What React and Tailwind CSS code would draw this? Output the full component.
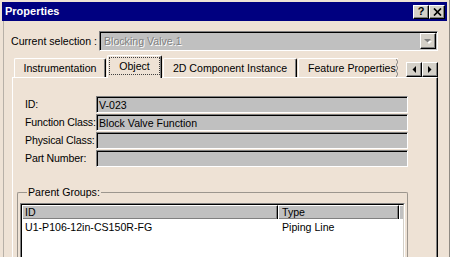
import React from "react";

const raised =
	"bg-[#d4d0c8] border border-t-white border-l-white border-b-black border-r-black shadow-[inset_-1px_-1px_0_#808080]";

function TitleButton({ children }) {
	return (
		<div className={`w-[16px] h-[14px] flex items-center justify-center ${raised}`}>
			{children}
		</div>
	);
}

function Field({ label, value, top }) {
	return (
		<div className={`flex items-center h-[17px] ml-[8px] ${top ? "" : "mt-[1px]"}`}>
			<div className="w-[71px] flex-none whitespace-nowrap tracking-[-0.15px]">{label}</div>
			<div className="w-[312px] h-full bg-[#c0c0c0] border border-t-[#808080] border-l-[#808080] border-b-white border-r-white shadow-[inset_1px_1px_0_#000] flex items-center pl-[2px] pt-px">
				{value}
			</div>
		</div>
	);
}

function Tab({ width, children }) {
	return (
		<div
			className={`${width} h-[19px] flex items-center justify-center rounded-t-[2px] border-t border-l border-r border-t-white border-l-white border-r-black shadow-[inset_-1px_0_0_#808080] whitespace-nowrap`}
		>
			{children}
		</div>
	);
}

const headCell =
	"flex items-center bg-[#c0c0c0] border-t border-l border-r border-t-white border-l-white border-r-black shadow-[inset_-1px_-1px_0_#808080]";

export default function App() {
	return (
		<div className="w-[450px] h-[257px] overflow-hidden flex flex-col bg-[#eee2d5] pt-[2px] pl-[2px] pr-[2px] border-r border-r-[#8f8a83] text-[10.6px] leading-none text-black font-[family-name:Liberation_Sans,Arial,sans-serif]">
			{/* title bar */}
			<div className="h-[19px] flex-none bg-[#000080] flex items-center pl-[3px] pr-[2px]">
				<span className="text-white font-bold text-[11px]">Properties</span>
				<div className="ml-auto flex">
					<TitleButton>
						<span className="font-bold text-[11px] leading-none">?</span>
					</TitleButton>
					<TitleButton>
						<svg width="9" height="8" viewBox="0 0 9 8">
							<path d="M1 0.5 L8 7.5 M8 0.5 L1 7.5" stroke="#000" strokeWidth="1.7" />
						</svg>
					</TitleButton>
				</div>
			</div>

			{/* body */}
			<div className="flex-1 flex flex-col ml-px border-l border-[#b7b0a7] pt-[10px]">
				<div className="flex items-center h-[20px]">
					<div className="w-[95px] pl-[7px] whitespace-nowrap">Current selection :</div>
					<div className="w-[339px] h-full flex items-center bg-[#c0c0c0] border border-t-[#808080] border-l-[#808080] border-b-white border-r-white shadow-[inset_1px_1px_0_#000]">
						<span className="pl-[4px] text-[#808080] [text-shadow:1px_1px_0_#fff]">Blocking Valve.1</span>
						<div className={`ml-auto mr-[1px] w-[16px] h-[16px] flex items-center justify-center ${raised}`}>
							<svg width="8" height="5" viewBox="0 0 8 5">
								<path d="M1 1 L7 1 L4 4 Z" fill="#fff" transform="translate(1 1)" />
								<path d="M0 0 L7 0 L3.5 3.5 Z" fill="#808080" />
							</svg>
						</div>
					</div>
				</div>

				{/* tabs */}
				<div className="mt-[4px] w-[434px] h-[22px] flex items-end pl-[10px] relative z-10">
					<Tab width="w-[92px]">Instrumentation</Tab>
					<div className="ml-[1px] w-[55px] h-[23px] -mb-px bg-[#eee2d5] rounded-t-[2px] border-t border-l border-r border-t-white border-l-white border-r-black shadow-[inset_-1px_0_0_#808080] pt-[1px] pb-[3px] px-px flex">
						<div className="flex-1 border border-dotted border-[#404040] flex items-center justify-center">
							Object
						</div>
					</div>
					<div className="ml-[1px]">
						<Tab width="w-[134px]">2D Component Instance</Tab>
					</div>
					<div className="ml-[1px] w-[100px] h-[19px] flex items-center rounded-tl-[2px] border-t border-l border-t-white border-l-white whitespace-nowrap overflow-hidden">
						<span className="pl-[9px]">Feature Properties</span>
						<svg className="ml-auto flex-none" width="3" height="18" viewBox="0 0 3 18">
							<path d="M0 0 L2 3 L0 6 L2 9 L0 12 L2 15 L0 18" stroke="#808080" fill="none" />
						</svg>
					</div>
					<div className="ml-auto self-start mt-[7px] flex">
						<div className={`w-[16px] h-[15px] flex items-center justify-center ${raised}`}>
							<svg width="4" height="7" viewBox="0 0 4 7">
								<path d="M4 0 L4 7 L0.5 3.5 Z" fill="#000" />
							</svg>
						</div>
						<div className={`w-[16px] h-[15px] flex items-center justify-center ${raised}`}>
							<svg width="4" height="7" viewBox="0 0 4 7">
								<path d="M0 0 L0 7 L3.5 3.5 Z" fill="#000" />
							</svg>
						</div>
					</div>
				</div>

				{/* tab page */}
				<div className="flex-1 ml-[8px] w-[426px] border-t border-l border-r border-t-white border-l-white border-r-black shadow-[inset_-1px_0_0_#808080] pt-[18px] pl-[4px]">
					<Field label="ID:" value="V-023" top />
					<Field label="Function Class:" value="Block Valve Function" />
					<Field label="Physical Class:" value="" />
					<Field label="Part Number:" value="" />

					{/* group box */}
					<div className="mt-[18px] w-[391px] flex flex-col">
						<div className="flex h-[14px]">
							<div className="w-[10px] h-[7px] self-end border-t border-l border-[#9c968e] rounded-tl-[2px]" />
							<span className="px-[1px] self-center whitespace-nowrap">Parent Groups:</span>
							<div className="flex-1 h-[7px] self-end border-t border-r border-[#9c968e] rounded-tr-[2px]" />
						</div>
						<div className="h-[90px] border-l border-r border-[#9c968e] pt-[4px] pl-[2px]">
							<div className="w-[385px] h-[80px] border border-t-[#808080] border-l-[#808080] border-b-white border-r-white">
								<div className="h-full border border-t-black border-l-black border-b-[#d4d0c8] border-r-[#d4d0c8] bg-white">
									<div className="flex h-[14px]">
										<div className={`w-[256px] pl-[2px] ${headCell}`}>ID</div>
										<div className={`w-[121px] pl-[3px] ${headCell}`}>Type</div>
										<div className="flex-1 bg-[#c0c0c0] border-t border-l border-t-white border-l-white" />
									</div>
									<div className="flex h-[16px] items-center">
										<div className="w-[256px] pl-[3px]">U1-P106-12in-CS150R-FG</div>
										<div className="pl-[4px]">Piping Line</div>
									</div>
								</div>
							</div>
						</div>
					</div>
				</div>
			</div>
		</div>
	);
}
